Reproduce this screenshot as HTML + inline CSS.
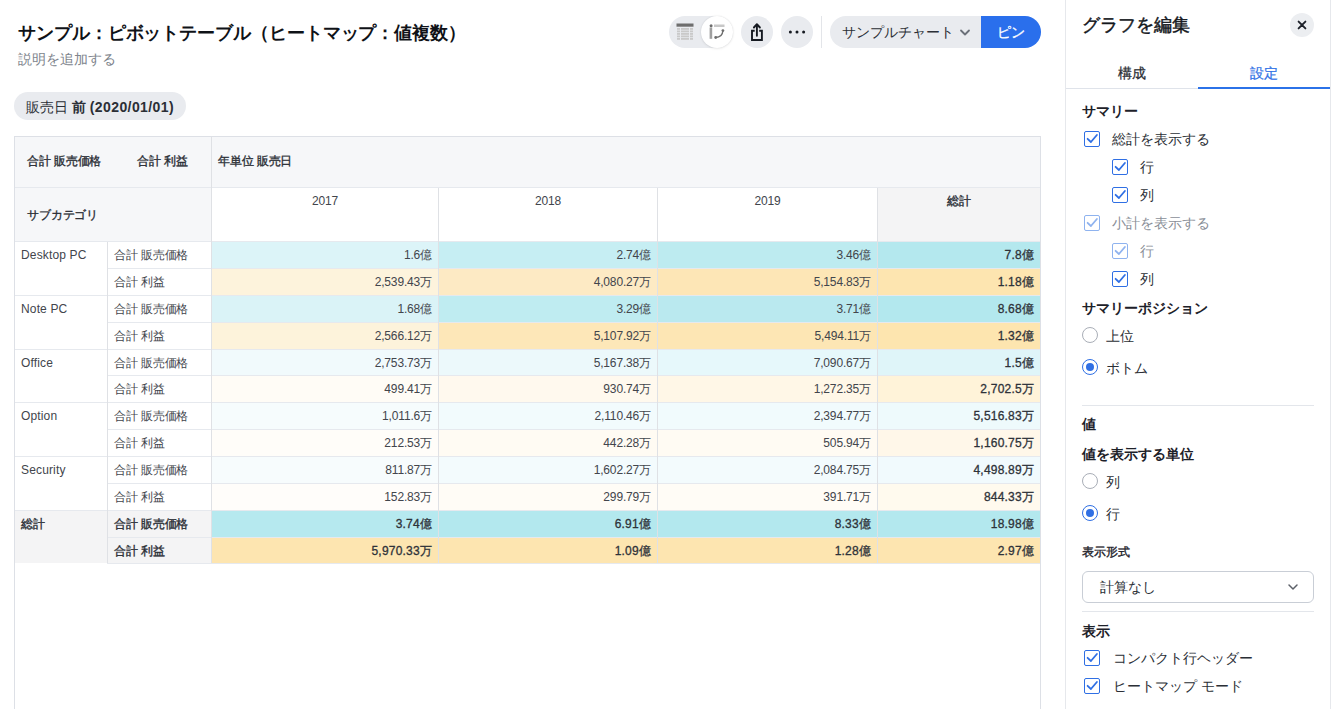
<!DOCTYPE html>
<html lang="ja"><head><meta charset="utf-8">
<style>
*{box-sizing:border-box;margin:0;padding:0}
html,body{width:1332px;height:709px;overflow:hidden;background:#fff}
body{font-family:"Liberation Sans",sans-serif;color:#1d2129;position:relative}
.abs{position:absolute}
.title{left:18px;top:21px;font-size:18px;font-weight:bold;color:#0f1217;line-height:24px;white-space:nowrap;letter-spacing:-.08px}
.sub{left:18px;top:49px;font-size:14px;color:#80858d;line-height:20px}
.pill{left:14px;top:92px;width:172px;height:28px;border-radius:14px;background:#e9ebef;font-size:14px;line-height:30px;padding-left:12px;color:#2b2f36;white-space:nowrap}
.btn{top:16px;width:32px;height:32px;border-radius:16px;background:#e9ebef}
/* table */
.tbl{left:14px;top:136px;width:1027px;height:600px;border:1px solid #dde0e6;border-bottom:none}
.hl{position:absolute;height:1px;background:#e6e9ee}
.vl{position:absolute;width:1px;background:#dfe1e5}
.c{position:absolute;font-size:12px;line-height:29px;white-space:nowrap;color:#42454c;letter-spacing:-.15px}
.r{text-align:right}
.b{color:#2a2e35;-webkit-text-stroke:.35px #2a2e35}
.nb{color:#2e3239;-webkit-text-stroke:.3px #2e3239;letter-spacing:.2px}
/* panel */
.panel{left:1065px;top:0;width:266px;height:709px;border-left:1px solid #e6e8ec;border-right:1px solid #e6e8ec}
.ptitle{left:1081.5px;top:13px;font-size:18px;line-height:24px;color:#14171c;-webkit-text-stroke:.45px #14171c}
.cb{position:absolute;width:16px;height:16px;border:1.5px solid #2f6fe4;border-radius:2px;background:#fff}
.cb svg{position:absolute;left:-1.5px;top:-1.5px}
.cb.dis{border-color:#8fb3ef}
.rd{position:absolute;width:16px;height:16px;border:1px solid #a9aeb7;border-radius:50%}
.rd.on{border:1.5px solid #2f6fe4}
.rd.on::after{content:"";position:absolute;left:2.5px;top:2.5px;width:8px;height:8px;border-radius:50%;background:#2f6fe4}
.lab{position:absolute;font-size:14px;line-height:20px;color:#2b2f36;white-space:nowrap}
.sec{position:absolute;font-size:14px;line-height:20px;font-weight:bold;color:#1d2129;white-space:nowrap}
.div{position:absolute;height:1px;background:#e3e6eb}
</style></head><body>

<div class="abs title">サンプル：ピボットテーブル（ヒートマップ：値複数）</div>
<div class="abs sub">説明を追加する</div>

<!-- toolbar -->
<div class="abs" style="left:669px;top:16px;width:64px;height:32px;border-radius:16px;background:#e9ebef"></div>
<div class="abs" style="left:701px;top:16px;width:32px;height:32px;border-radius:16px;background:#fff;box-shadow:0 0 2px rgba(0,0,0,.10),0 1px 3px rgba(0,0,0,.06)"></div>
<svg class="abs" style="left:668px;top:14px" width="68" height="36" viewBox="0 0 68 36">
<rect x="8.5" y="9.5" width="17" height="3.2" fill="#6e6e6e"/>
<rect x="9" y="14.0" width="3" height="1.8" fill="#c9c9c9"/><rect x="13" y="14.0" width="8" height="1.8" fill="#c9c9c9"/><rect x="22" y="14.0" width="3" height="1.8" fill="#c9c9c9"/><rect x="9" y="16.5" width="3" height="1.8" fill="#c9c9c9"/><rect x="13" y="16.5" width="8" height="1.8" fill="#c9c9c9"/><rect x="22" y="16.5" width="3" height="1.8" fill="#c9c9c9"/><rect x="9" y="19.0" width="3" height="1.8" fill="#c9c9c9"/><rect x="13" y="19.0" width="8" height="1.8" fill="#c9c9c9"/><rect x="22" y="19.0" width="3" height="1.8" fill="#c9c9c9"/><rect x="9" y="21.5" width="3" height="1.8" fill="#c9c9c9"/><rect x="13" y="21.5" width="8" height="1.8" fill="#c9c9c9"/><rect x="22" y="21.5" width="3" height="1.8" fill="#c9c9c9"/><rect x="9" y="24.0" width="3" height="1.8" fill="#c9c9c9"/><rect x="13" y="24.0" width="8" height="1.8" fill="#c9c9c9"/><rect x="22" y="24.0" width="3" height="1.8" fill="#c9c9c9"/>
<rect x="41.6" y="13.5" width="2.6" height="11.3" fill="#a0a0a0"/>
<circle cx="43.1" cy="11.7" r="1.5" fill="#6e6e6e"/>
<rect x="46" y="10.5" width="10.5" height="2.5" fill="#c8c8c8"/>
<path d="M47.7 23.5 Q54.5 23 54.9 16.6" fill="none" stroke="#6e6e6e" stroke-width="1.3"/>
<circle cx="47.7" cy="23.5" r="1.4" fill="#6e6e6e"/>
<circle cx="54.9" cy="16.6" r="1.4" fill="#6e6e6e"/>
</svg>
<div class="abs btn" style="left:741px"></div>
<svg class="abs" style="left:741px;top:16px" width="32" height="32" viewBox="0 0 32 32">
<path d="M13.7 14.8 H11 V24 H20.9 V14.8 H18.2" fill="none" stroke="#161a21" stroke-width="1.9" stroke-linejoin="miter"/>
<path d="M15.9 19.7 V8.5 M12.9 11.5 L15.9 8.2 L18.9 11.5" fill="none" stroke="#161a21" stroke-width="1.9" stroke-linecap="round" stroke-linejoin="round"/>
</svg>
<div class="abs btn" style="left:781px"></div>
<svg class="abs" style="left:781px;top:16px" width="32" height="32" viewBox="0 0 32 32">
<circle cx="9.4" cy="16" r="1.5" fill="#161a21"/><circle cx="16" cy="16" r="1.5" fill="#161a21"/><circle cx="22.6" cy="16" r="1.5" fill="#161a21"/>
</svg>
<div class="abs" style="left:821px;top:16px;width:1px;height:32px;background:#e3e5e9"></div>
<div class="abs" style="left:830px;top:16px;width:151px;height:32px;border-radius:16px 0 0 16px;background:#e9ebef;font-size:14px;line-height:32px;padding-left:12px;color:#2b2f36;white-space:nowrap">サンプルチャート</div>
<svg class="abs" style="left:958px;top:26px" width="14" height="12" viewBox="0 0 14 12"><path d="M3 4.5 L7 8.5 L11 4.5" fill="none" stroke="#6b7079" stroke-width="1.8" stroke-linecap="round" stroke-linejoin="round"/></svg>
<div class="abs" style="left:981px;top:16px;width:60px;height:32px;border-radius:0 16px 16px 0;background:#2a6fec;color:#fff;font-size:14px;line-height:32px;padding-left:16px;-webkit-text-stroke:.3px #fff">ピン</div>

<div class="abs pill">販売日 <b>前 <span style="letter-spacing:.4px">(2020/01/01)</span></b></div>

<!-- table -->
<div class="abs tbl"></div>
<div class="abs" style="left:15px;top:137px;width:1025px;height:104px;background:#f6f7f9"></div>
<div class="abs" style="left:212px;top:188px;width:226px;height:53px;background:#fff"></div>
<div class="abs" style="left:439px;top:188px;width:218px;height:53px;background:#fff"></div>
<div class="abs" style="left:658px;top:188px;width:219px;height:53px;background:#fff"></div>
<div class="abs" style="left:878px;top:188px;width:162px;height:53px;background:#f4f4f5"></div>
<div class="abs" style="left:15px;top:510px;width:196px;height:53px;background:#f4f4f5"></div>
<div class="abs" style="left:212px;top:242px;width:226px;height:26px;background:#dcf4f8"></div>
<div class="abs" style="left:439px;top:242px;width:218px;height:26px;background:#c6eef3"></div>
<div class="abs" style="left:658px;top:242px;width:219px;height:26px;background:#bdebf0"></div>
<div class="abs" style="left:878px;top:242px;width:162px;height:26px;background:#b4e8ee"></div>
<div class="abs" style="left:212px;top:269px;width:226px;height:26px;background:#fdf3dc"></div>
<div class="abs" style="left:439px;top:269px;width:218px;height:26px;background:#fdeac4"></div>
<div class="abs" style="left:658px;top:269px;width:219px;height:26px;background:#fde6b6"></div>
<div class="abs" style="left:878px;top:269px;width:162px;height:26px;background:#fde5b0"></div>
<div class="abs" style="left:212px;top:296px;width:226px;height:26px;background:#daf3f7"></div>
<div class="abs" style="left:439px;top:296px;width:218px;height:26px;background:#bfecf1"></div>
<div class="abs" style="left:658px;top:296px;width:219px;height:26px;background:#bae9ef"></div>
<div class="abs" style="left:878px;top:296px;width:162px;height:26px;background:#b3e8ee"></div>
<div class="abs" style="left:212px;top:323px;width:226px;height:26px;background:#fdf3db"></div>
<div class="abs" style="left:439px;top:323px;width:218px;height:26px;background:#fde7b8"></div>
<div class="abs" style="left:658px;top:323px;width:219px;height:26px;background:#fde6b4"></div>
<div class="abs" style="left:878px;top:323px;width:162px;height:26px;background:#fde5af"></div>
<div class="abs" style="left:212px;top:350px;width:226px;height:25px;background:#f1fafc"></div>
<div class="abs" style="left:439px;top:350px;width:218px;height:25px;background:#ecf9fb"></div>
<div class="abs" style="left:658px;top:350px;width:219px;height:25px;background:#e6f8fb"></div>
<div class="abs" style="left:878px;top:350px;width:162px;height:25px;background:#dff5f9"></div>
<div class="abs" style="left:212px;top:376px;width:226px;height:26px;background:#fffcf6"></div>
<div class="abs" style="left:439px;top:376px;width:218px;height:26px;background:#fff9ee"></div>
<div class="abs" style="left:658px;top:376px;width:219px;height:26px;background:#fff7e7"></div>
<div class="abs" style="left:878px;top:376px;width:162px;height:26px;background:#fff3d9"></div>
<div class="abs" style="left:212px;top:403px;width:226px;height:26px;background:#f6fcfd"></div>
<div class="abs" style="left:439px;top:403px;width:218px;height:26px;background:#f2fbfd"></div>
<div class="abs" style="left:658px;top:403px;width:219px;height:26px;background:#f1fbfd"></div>
<div class="abs" style="left:878px;top:403px;width:162px;height:26px;background:#eefafc"></div>
<div class="abs" style="left:212px;top:430px;width:226px;height:26px;background:#fffdf9"></div>
<div class="abs" style="left:439px;top:430px;width:218px;height:26px;background:#fffbf3"></div>
<div class="abs" style="left:658px;top:430px;width:219px;height:26px;background:#fffbf3"></div>
<div class="abs" style="left:878px;top:430px;width:162px;height:26px;background:#fff7e9"></div>
<div class="abs" style="left:212px;top:457px;width:226px;height:26px;background:#f7fcfd"></div>
<div class="abs" style="left:439px;top:457px;width:218px;height:26px;background:#f3fbfd"></div>
<div class="abs" style="left:658px;top:457px;width:219px;height:26px;background:#f3fbfd"></div>
<div class="abs" style="left:878px;top:457px;width:162px;height:26px;background:#f1fafd"></div>
<div class="abs" style="left:212px;top:484px;width:226px;height:26px;background:#fffdfa"></div>
<div class="abs" style="left:439px;top:484px;width:218px;height:26px;background:#fffcf6"></div>
<div class="abs" style="left:658px;top:484px;width:219px;height:26px;background:#fffcf6"></div>
<div class="abs" style="left:878px;top:484px;width:162px;height:26px;background:#fffaee"></div>
<div class="abs" style="left:212px;top:511px;width:226px;height:26px;background:#b6e9ef"></div>
<div class="abs" style="left:439px;top:511px;width:218px;height:26px;background:#b3e8ee"></div>
<div class="abs" style="left:658px;top:511px;width:219px;height:26px;background:#b3e8ee"></div>
<div class="abs" style="left:878px;top:511px;width:162px;height:26px;background:#b3e8ee"></div>
<div class="abs" style="left:212px;top:538px;width:226px;height:25px;background:#fde5b0"></div>
<div class="abs" style="left:439px;top:538px;width:218px;height:25px;background:#fde5b0"></div>
<div class="abs" style="left:658px;top:538px;width:219px;height:25px;background:#fde5b0"></div>
<div class="abs" style="left:878px;top:538px;width:162px;height:25px;background:#fde5b0"></div>
<div class="hl" style="left:15px;top:187px;width:1025px"></div>
<div class="hl" style="left:15px;top:241px;width:1025px"></div>
<div class="hl" style="left:107px;top:268px;width:933px"></div>
<div class="hl" style="left:15px;top:295px;width:1025px"></div>
<div class="hl" style="left:107px;top:322px;width:933px"></div>
<div class="hl" style="left:15px;top:349px;width:1025px"></div>
<div class="hl" style="left:107px;top:375px;width:933px"></div>
<div class="hl" style="left:15px;top:402px;width:1025px"></div>
<div class="hl" style="left:107px;top:429px;width:933px"></div>
<div class="hl" style="left:15px;top:456px;width:1025px"></div>
<div class="hl" style="left:107px;top:483px;width:933px"></div>
<div class="hl" style="left:15px;top:510px;width:1025px"></div>
<div class="hl" style="left:107px;top:537px;width:933px"></div>
<div class="hl" style="left:107px;top:563px;width:933px"></div>
<div class="vl" style="left:211px;top:137px;height:426px"></div>
<div class="vl" style="left:438px;top:188px;height:375px"></div>
<div class="vl" style="left:657px;top:188px;height:375px"></div>
<div class="vl" style="left:877px;top:188px;height:375px"></div>
<div class="vl" style="left:107px;top:242px;height:321px"></div>
<div class="c b" style="left:27px;top:147px">合計 販売価格</div>
<div class="c b" style="left:137px;top:147px">合計 利益</div>
<div class="c b" style="left:218px;top:147px">年単位 販売日</div>
<div class="c b" style="left:27px;top:201px">サブカテゴリ</div>
<div class="c" style="left:212px;top:187px;width:226px;text-align:center">2017</div>
<div class="c" style="left:439px;top:187px;width:218px;text-align:center">2018</div>
<div class="c" style="left:658px;top:187px;width:219px;text-align:center">2019</div>
<div class="c b" style="left:878px;top:187px;width:162px;text-align:center">総計</div>
<div class="c" style="left:21px;top:241px;letter-spacing:.15px">Desktop PC</div>
<div class="c" style="left:114px;top:241px">合計 販売価格</div>
<div class="c r" style="right:900px;top:241px">1.6億</div>
<div class="c r" style="right:681px;top:241px">2.74億</div>
<div class="c r" style="right:461px;top:241px">3.46億</div>
<div class="c r nb" style="right:298px;top:241px">7.8億</div>
<div class="c" style="left:114px;top:268px">合計 利益</div>
<div class="c r" style="right:900px;top:268px">2,539.43万</div>
<div class="c r" style="right:681px;top:268px">4,080.27万</div>
<div class="c r" style="right:461px;top:268px">5,154.83万</div>
<div class="c r nb" style="right:298px;top:268px">1.18億</div>
<div class="c" style="left:21px;top:295px;letter-spacing:.15px">Note PC</div>
<div class="c" style="left:114px;top:295px">合計 販売価格</div>
<div class="c r" style="right:900px;top:295px">1.68億</div>
<div class="c r" style="right:681px;top:295px">3.29億</div>
<div class="c r" style="right:461px;top:295px">3.71億</div>
<div class="c r nb" style="right:298px;top:295px">8.68億</div>
<div class="c" style="left:114px;top:322px">合計 利益</div>
<div class="c r" style="right:900px;top:322px">2,566.12万</div>
<div class="c r" style="right:681px;top:322px">5,107.92万</div>
<div class="c r" style="right:461px;top:322px">5,494.11万</div>
<div class="c r nb" style="right:298px;top:322px">1.32億</div>
<div class="c" style="left:21px;top:349px;letter-spacing:.15px">Office</div>
<div class="c" style="left:114px;top:349px">合計 販売価格</div>
<div class="c r" style="right:900px;top:349px">2,753.73万</div>
<div class="c r" style="right:681px;top:349px">5,167.38万</div>
<div class="c r" style="right:461px;top:349px">7,090.67万</div>
<div class="c r nb" style="right:298px;top:349px">1.5億</div>
<div class="c" style="left:114px;top:375px">合計 利益</div>
<div class="c r" style="right:900px;top:375px">499.41万</div>
<div class="c r" style="right:681px;top:375px">930.74万</div>
<div class="c r" style="right:461px;top:375px">1,272.35万</div>
<div class="c r nb" style="right:298px;top:375px">2,702.5万</div>
<div class="c" style="left:21px;top:402px;letter-spacing:.15px">Option</div>
<div class="c" style="left:114px;top:402px">合計 販売価格</div>
<div class="c r" style="right:900px;top:402px">1,011.6万</div>
<div class="c r" style="right:681px;top:402px">2,110.46万</div>
<div class="c r" style="right:461px;top:402px">2,394.77万</div>
<div class="c r nb" style="right:298px;top:402px">5,516.83万</div>
<div class="c" style="left:114px;top:429px">合計 利益</div>
<div class="c r" style="right:900px;top:429px">212.53万</div>
<div class="c r" style="right:681px;top:429px">442.28万</div>
<div class="c r" style="right:461px;top:429px">505.94万</div>
<div class="c r nb" style="right:298px;top:429px">1,160.75万</div>
<div class="c" style="left:21px;top:456px;letter-spacing:.15px">Security</div>
<div class="c" style="left:114px;top:456px">合計 販売価格</div>
<div class="c r" style="right:900px;top:456px">811.87万</div>
<div class="c r" style="right:681px;top:456px">1,602.27万</div>
<div class="c r" style="right:461px;top:456px">2,084.75万</div>
<div class="c r nb" style="right:298px;top:456px">4,498.89万</div>
<div class="c" style="left:114px;top:483px">合計 利益</div>
<div class="c r" style="right:900px;top:483px">152.83万</div>
<div class="c r" style="right:681px;top:483px">299.79万</div>
<div class="c r" style="right:461px;top:483px">391.71万</div>
<div class="c r nb" style="right:298px;top:483px">844.33万</div>
<div class="c b" style="left:21px;top:510px;letter-spacing:.15px">総計</div>
<div class="abs" style="left:108px;top:511px;width:103px;height:26px;background:#f4f4f5"></div>
<div class="c b" style="left:114px;top:510px">合計 販売価格</div>
<div class="c r nb" style="right:900px;top:510px">3.74億</div>
<div class="c r nb" style="right:681px;top:510px">6.91億</div>
<div class="c r nb" style="right:461px;top:510px">8.33億</div>
<div class="c r nb" style="right:298px;top:510px">18.98億</div>
<div class="abs" style="left:108px;top:538px;width:103px;height:25px;background:#f4f4f5"></div>
<div class="c b" style="left:114px;top:537px">合計 利益</div>
<div class="c r nb" style="right:900px;top:537px">5,970.33万</div>
<div class="c r nb" style="right:681px;top:537px">1.09億</div>
<div class="c r nb" style="right:461px;top:537px">1.28億</div>
<div class="c r nb" style="right:298px;top:537px">2.97億</div>
<!-- /table -->
<!-- panel -->
<div class="abs panel"></div>
<div class="abs ptitle">グラフを編集</div>
<div class="abs" style="left:1290px;top:13px;width:24px;height:24px;border-radius:12px;background:#eceef1"><svg width="24" height="24" viewBox="0 0 24 24" style="position:absolute;left:0;top:0"><path d="M8.6 8.6 L15.4 15.4 M15.4 8.6 L8.6 15.4" stroke="#1d2129" stroke-width="1.9" stroke-linecap="round"/></svg></div>
<div class="lab" style="left:1066px;top:63px;width:132px;text-align:center;color:#2b2f36;-webkit-text-stroke:.25px #2b2f36">構成</div>
<div class="lab" style="left:1198px;top:63px;width:132px;text-align:center;color:#3373e6;-webkit-text-stroke:.25px #3373e6">設定</div>
<div class="abs" style="left:1066px;top:88px;width:132px;height:1px;background:#dfe3ea"></div>
<div class="abs" style="left:1198px;top:87px;width:132px;height:2px;background:#2b72e8"></div>
<div class="sec" style="left:1082px;top:101px">サマリー</div>
<div class="cb" style="left:1084px;top:131px"><svg width="16" height="16" viewBox="0 0 16 16"><path d="M3.6 7.8 L6.9 11 L12.9 4" fill="none" stroke="#2f6fe4" stroke-width="1.8" stroke-linecap="round" stroke-linejoin="round"/></svg></div><div class="lab" style="left:1112px;top:129px;color:#2b2f36">総計を表示する</div>
<div class="cb" style="left:1112px;top:159px"><svg width="16" height="16" viewBox="0 0 16 16"><path d="M3.6 7.8 L6.9 11 L12.9 4" fill="none" stroke="#2f6fe4" stroke-width="1.8" stroke-linecap="round" stroke-linejoin="round"/></svg></div><div class="lab" style="left:1140px;top:157px;color:#2b2f36">行</div>
<div class="cb" style="left:1112px;top:187px"><svg width="16" height="16" viewBox="0 0 16 16"><path d="M3.6 7.8 L6.9 11 L12.9 4" fill="none" stroke="#2f6fe4" stroke-width="1.8" stroke-linecap="round" stroke-linejoin="round"/></svg></div><div class="lab" style="left:1140px;top:185px;color:#2b2f36">列</div>
<div class="cb dis" style="left:1084px;top:215px"><svg width="16" height="16" viewBox="0 0 16 16"><path d="M3.6 7.8 L6.9 11 L12.9 4" fill="none" stroke="#8fb3ef" stroke-width="1.8" stroke-linecap="round" stroke-linejoin="round"/></svg></div><div class="lab" style="left:1112px;top:213px;color:#8a8f98">小計を表示する</div>
<div class="cb dis" style="left:1112px;top:243px"><svg width="16" height="16" viewBox="0 0 16 16"><path d="M3.6 7.8 L6.9 11 L12.9 4" fill="none" stroke="#8fb3ef" stroke-width="1.8" stroke-linecap="round" stroke-linejoin="round"/></svg></div><div class="lab" style="left:1140px;top:241px;color:#8a8f98">行</div>
<div class="cb" style="left:1112px;top:271px"><svg width="16" height="16" viewBox="0 0 16 16"><path d="M3.6 7.8 L6.9 11 L12.9 4" fill="none" stroke="#2f6fe4" stroke-width="1.8" stroke-linecap="round" stroke-linejoin="round"/></svg></div><div class="lab" style="left:1140px;top:269px;color:#2b2f36">列</div>
<div class="sec" style="left:1082px;top:298px">サマリーポジション</div>
<div class="rd" style="left:1082px;top:327px"></div><div class="lab" style="left:1106px;top:326px">上位</div>
<div class="rd on" style="left:1082px;top:359px"></div><div class="lab" style="left:1106px;top:358px">ボトム</div>
<div class="div" style="left:1082px;top:405px;width:232px"></div>
<div class="sec" style="left:1082px;top:414px">値</div>
<div class="sec" style="left:1082px;top:444px">値を表示する単位</div>
<div class="rd" style="left:1082px;top:473px"></div><div class="lab" style="left:1106px;top:472px">列</div>
<div class="rd on" style="left:1082px;top:505px"></div><div class="lab" style="left:1106px;top:504px">行</div>
<div class="sec" style="left:1082px;top:541.5px;font-size:12px;font-weight:normal;-webkit-text-stroke:.35px #1d2129">表示形式</div>
<div class="abs" style="left:1082px;top:571px;width:232px;height:32px;border:1px solid #c9ced6;border-radius:6px"></div>
<div class="lab" style="left:1100px;top:577px">計算なし</div>
<svg class="abs" style="left:1286px;top:581px" width="14" height="12" viewBox="0 0 14 12"><path d="M3 4 L7 8 L11 4" fill="none" stroke="#5c6068" stroke-width="1.5" stroke-linecap="round" stroke-linejoin="round"/></svg>
<div class="div" style="left:1082px;top:611px;width:232px"></div>
<div class="sec" style="left:1082px;top:621px">表示</div>
<div class="cb" style="left:1084px;top:650px"><svg width="16" height="16" viewBox="0 0 16 16"><path d="M3.6 7.8 L6.9 11 L12.9 4" fill="none" stroke="#2f6fe4" stroke-width="1.8" stroke-linecap="round" stroke-linejoin="round"/></svg></div><div class="lab" style="left:1113px;top:648px;color:#2b2f36">コンパクト行ヘッダー</div>
<div class="cb" style="left:1084px;top:678px"><svg width="16" height="16" viewBox="0 0 16 16"><path d="M3.6 7.8 L6.9 11 L12.9 4" fill="none" stroke="#2f6fe4" stroke-width="1.8" stroke-linecap="round" stroke-linejoin="round"/></svg></div><div class="lab" style="left:1113px;top:676px;color:#2b2f36">ヒートマップ モード</div>
</body></html>
